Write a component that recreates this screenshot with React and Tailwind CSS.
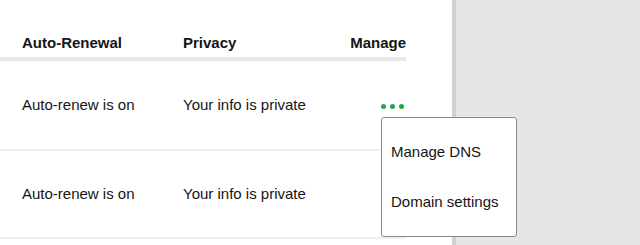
import React from 'react';

const rows = [
    { renewal: 'Auto-renew is on', privacy: 'Your info is private', menu: true },
    { renewal: 'Auto-renew is on', privacy: 'Your info is private', menu: false },
];

function Dots() {
    return (
        <div className="flex gap-[4px]">
            <span className="w-[5px] h-[5px] rounded-full bg-[#1fa845]" />
            <span className="w-[5px] h-[5px] rounded-full bg-[#1fa845]" />
            <span className="w-[5px] h-[5px] rounded-full bg-[#1fa845]" />
        </div>
    );
}

export default function App() {
    return (
        <div
            className="flex h-[245px] w-[640px] overflow-hidden bg-[#e6e6e6] text-[15px] leading-[18px] text-[#151515]"
            style={{ fontFamily: '"Liberation Sans", Arial, sans-serif' }}
        >
            <div className="w-[456px] shrink-0 bg-white border-r-4 border-[#d0d0d0]">
                <div className="w-[406px]">
                    {/* Header */}
                    <div className="flex font-bold pt-[34px] pb-[5px] border-b-4 border-[#e8e8e8]">
                        <div className="w-[183px] pl-[22px]">Auto-Renewal</div>
                        <div className="flex-1">Privacy</div>
                        <div className="text-right">Manage</div>
                    </div>

                    {/* Rows */}
                    {rows.map((row, i) => (
                        <div
                            key={i}
                            className={`flex items-center border-b-2 border-[#f0f0f0] ${i === 0 ? 'h-[90px]' : 'h-[88px]'}`}
                        >
                            <div className="w-[183px] pl-[22px]">{row.renewal}</div>
                            <div className="flex-1">{row.privacy}</div>
                            <div className="relative flex items-center justify-end pr-[2px] pt-[2px]">
                                {row.menu && (
                                    <>
                                        <Dots />
                                        <div className="absolute z-10 left-[0px] top-[15px] w-[136px] py-[9px] bg-white border border-[#8a8a8a] rounded-[3px]">
                                            <div className="h-[50px] flex items-center pl-[9px]">Manage DNS</div>
                                            <div className="h-[50px] flex items-center pl-[9px]">Domain settings</div>
                                        </div>
                                    </>
                                )}
                            </div>
                        </div>
                    ))}
                </div>
            </div>
            <div className="flex-1" />
        </div>
    );
}
